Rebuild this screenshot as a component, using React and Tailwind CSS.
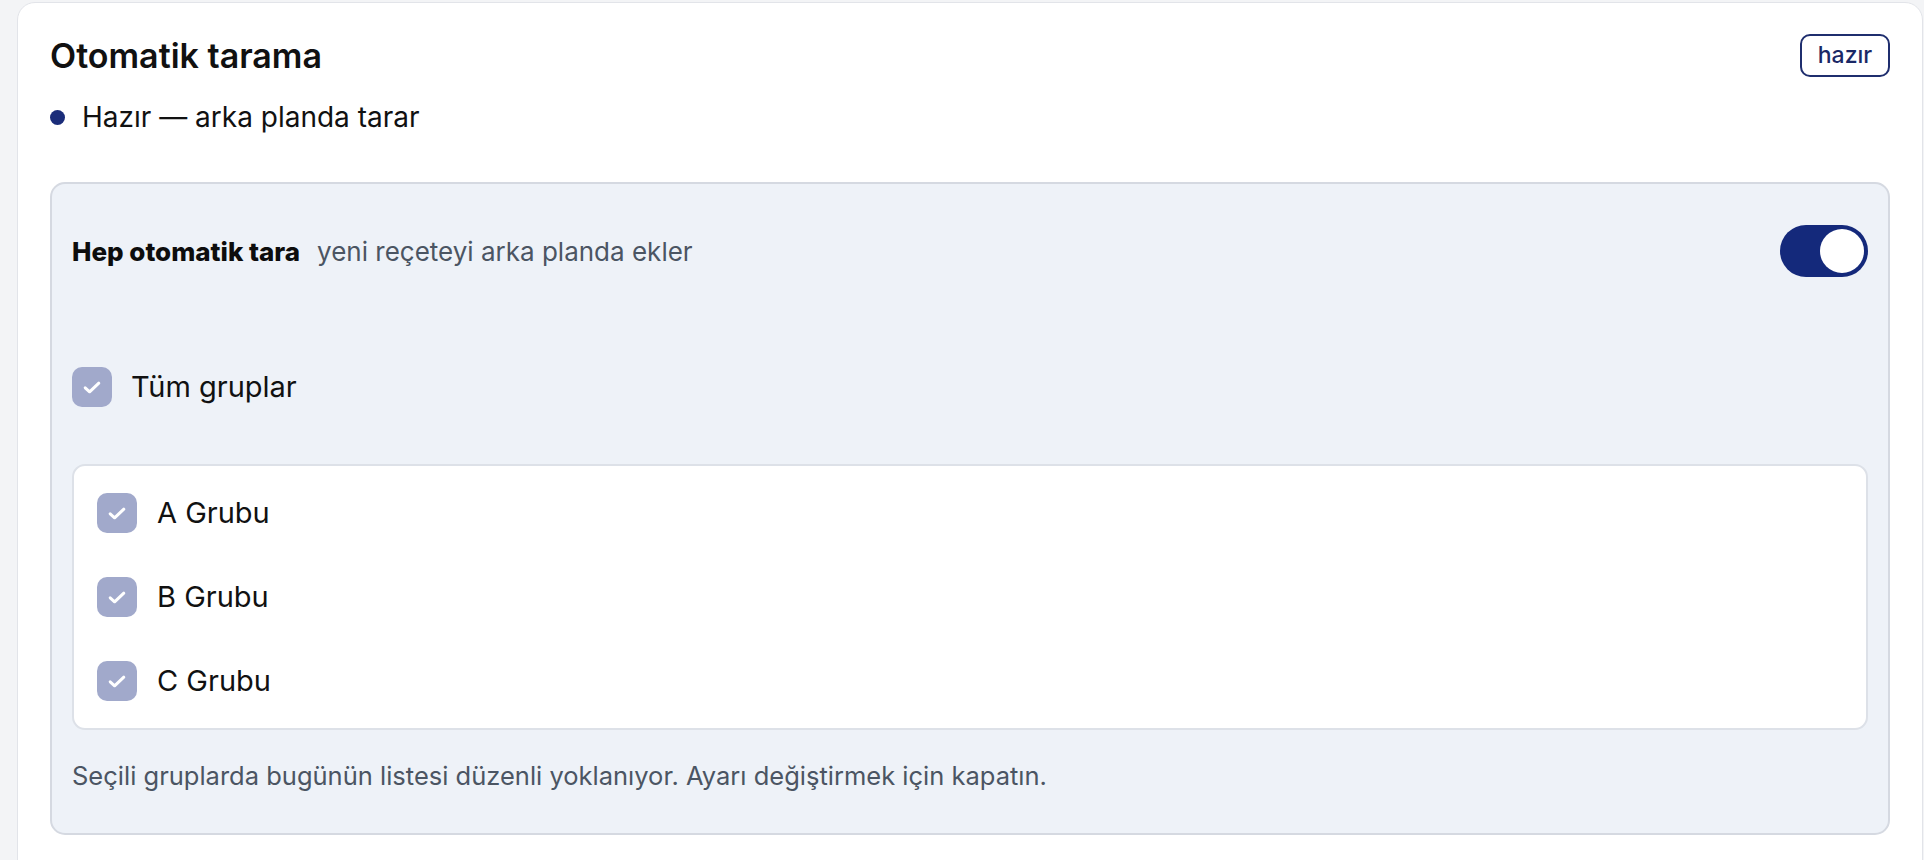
import React from "react";

function Check() {
  return (
    <span className="flex h-[40px] w-[40px] shrink-0 items-center justify-center rounded-[10px] bg-[#a1a9cb]">
      <svg width="18" height="13" viewBox="0 0 18 13" fill="none">
        <path d="M2.2 6.8 L6.6 10.8 L15.8 2.2" stroke="white" strokeWidth="3" strokeLinecap="round" strokeLinejoin="round" />
      </svg>
    </span>
  );
}

export default function App() {
  const font = { fontFamily: "Inter, 'Noto Sans', sans-serif" };
  return (
    <div className="min-h-screen bg-[#f3f4f6] pl-[17px] pr-[1px] pt-[2px]" style={font}>
      <div className="rounded-t-[18px] border border-[#e2e4e9] bg-white px-8 pt-[31px] pb-8">
        <div className="flex items-center justify-between">
          <h2 className="text-[34px] font-semibold leading-[40px] text-[#111111]">Otomatik tarama</h2>
          <span className="flex h-[43px] w-[90px] items-center justify-center rounded-[10px] border-2 border-[#1f2e6e] text-[23px] font-medium leading-none text-[#1a2866]">
            hazır
          </span>
        </div>
        <div className="mt-[22px] flex items-center gap-[17px]">
          <span className="h-[15px] w-[15px] rounded-full bg-[#1b2d7a]" />
          <span className="text-[28px] leading-[36px] text-[#111111]">Hazır — arka planda tarar</span>
        </div>

        <div className="mt-[47px] rounded-[15px] border-2 border-[#d5d9e1] bg-[#eef2f8] px-5 pt-[41px] pb-[41px]">
          <div className="flex h-[52px] items-center justify-between">
            <div className="flex items-baseline gap-[17px]">
              <span className="text-[26px] font-extrabold text-[#0d0d0d]">Hep otomatik tara</span>
              <span className="text-[26px] text-[#4b5563]">yeni reçeteyi arka planda ekler</span>
            </div>
            <span className="flex h-[52px] w-[88px] items-center justify-end rounded-full bg-[#14297b] p-[4px]">
              <span className="h-[44px] w-[44px] rounded-full bg-white" />
            </span>
          </div>

          <div className="mt-[90px] flex h-[40px] items-center gap-[19px]">
            <Check />
            <span className="text-[29px] leading-[40px] text-[#111111]">Tüm gruplar</span>
          </div>

          <div className="mt-[57px] flex flex-col gap-[44px] rounded-[13px] border-2 border-[#dde1e8] bg-white px-[23px] py-[27px]">
            {["A Grubu", "B Grubu", "C Grubu"].map((g) => (
              <div key={g} className="flex h-[40px] items-center gap-[20px]">
                <Check />
                <span className="text-[29px] leading-[40px] text-[#111111]">{g}</span>
              </div>
            ))}
          </div>

          <p className="mt-[30px] text-[25.5px] leading-[32px] text-[#4b5563]">
            Seçili gruplarda bugünün listesi düzenli yoklanıyor. Ayarı değiştirmek için kapatın.
          </p>
        </div>
      </div>
    </div>
  );
}
